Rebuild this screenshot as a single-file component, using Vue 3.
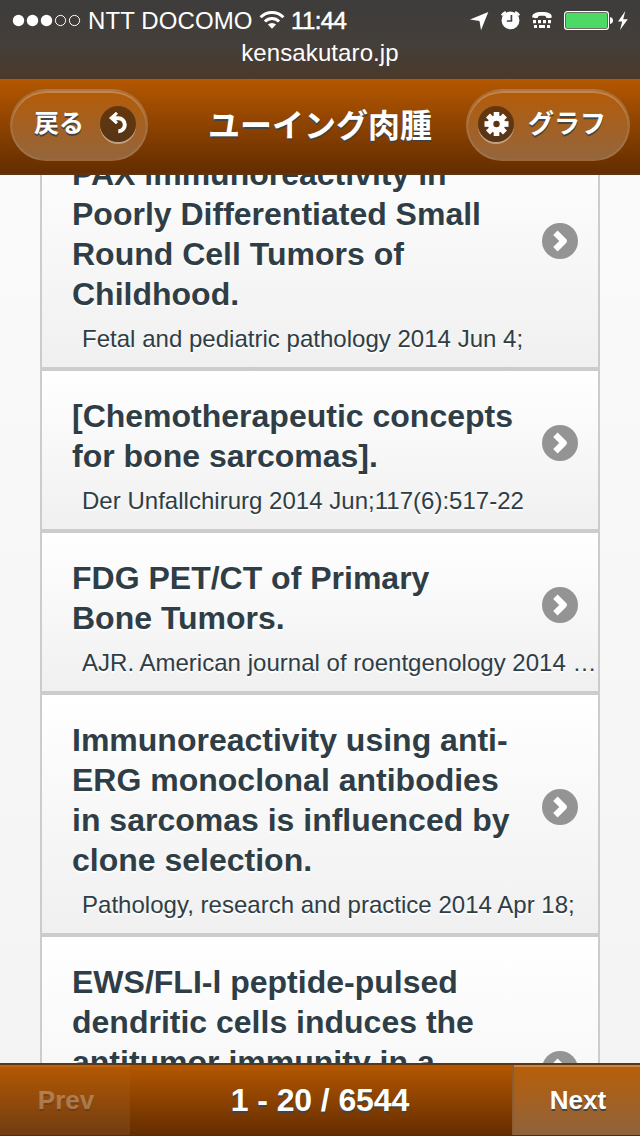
<template>
  <div class="screen">
    <div class="status">
      <div class="status-row">
        <div class="carrier">
          <svg class="signal" width="70" height="14" viewBox="0 0 70 14">
            <circle v-for="n in 3" :key="n" :cx="6.5 + (n - 1) * 14" cy="7.5" r="5.7" fill="#fff" />
            <circle v-for="n in 2" :key="n + 3" :cx="48.500 + (n - 1) * 14" cy="7.500" r="5.100" fill="none" stroke="#fff" />
          </svg>
          <span class="network">NTT DOCOMO</span>
          <svg class="wifi" width="26" height="20" viewBox="0 0 26 20">
            <g fill="none" stroke="#fff" stroke-width="3">
              <path d="M1.6 7.2a16.1 16.1 0 0 1 22.8 0" />
              <path d="M5.9 11.5a10 10 0 0 1 14.2 0" />
            </g>
            <path d="M8.9 14.6a5.8 5.8 0 0 1 8.2 0L13 18.7z" fill="#fff" />
          </svg>
          <span class="time">11:44</span>
        </div>
        <div class="indicators">
          <svg width="170" height="24" viewBox="0 0 170 24">
            <path d="M0 11.5 18.3 4 11 22.3 9.5 13z" fill="#fff" />
            <circle cx="40.5" cy="12.4" r="8.900" fill="#fff" />
            <path d="M31.8 7.300a9.700 9.700 0 0 1 4-3.300M45.200 4a9.700 9.700 0 0 1 4 3.300" fill="none" stroke="#fff" stroke-width="2.200" />
            <path d="M41.400 7v6h-4.600" fill="none" stroke="#44403c" stroke-width="1.700" />
            <path d="M62.200 9C62 6 65 4 72 4s10 2 9.800 5c0 1.600-6 1.600-6 0V8.200c-2-.6-5.600-.6-7.600 0V9c0 1.600-6 1.600-6 0z" fill="#fff" />
            <path d="M63 12h3v3.200h-3zM68 12h3v3.200h-3zM73 12h3v3.200h-3zM78 12h3v3.200h-3zM64 17h3v3h-3zM69 17h6v3h-6zM77 17h3v3h-3z" fill="#fff" />
            <rect x="94.600" y="3.600" width="43.800" height="17.800" rx="2.600" fill="none" stroke="#fff" stroke-width="1.200" />
            <rect x="96" y="5" width="41" height="15" rx="1" fill="#4cd964" />
            <path d="M140 9q3 .8 3 3.500T140 16z" fill="#fff" />
            <path d="M155.300 3 148 13.500h4.200L150 22l7.800-10.800h-4.600z" fill="#fff" />
          </svg>
        </div>
      </div>
      <div class="host"><span>kensakutaro.jp</span></div>
    </div>

    <header class="header">
      <button class="pill back" type="button">
        <span class="pill-text">戻る</span>
        <span class="disc">
          <svg width="36" height="36" viewBox="0 0 36 36">
            <path d="M12 12.300h6.300a6.500 6.500 0 0 1 0 13" fill="none" stroke="#fff" stroke-width="4" />
            <path d="M9.500 12 16 6.300l1.400 1.500-3.600 4.200 3.600 4.200-1.400 1.600z" fill="#fff" stroke="#fff" stroke-linejoin="round" />
          </svg>
        </span>
      </button>
      <h1 class="heading">ユーイング肉腫</h1>
      <button class="pill graph" type="button">
        <span class="disc">
          <svg width="36" height="36" viewBox="0 0 36 36">
            <g fill="#fff">
              <rect v-for="a in [0, 45, 90, 135]" :key="a" x="15.700" y="6" width="5.600" height="24" :transform="`rotate(${a} 18.5 18)`" />
              <circle cx="18.500" cy="18" r="8.700" />
            </g>
            <circle cx="18.500" cy="18" r="3.200" fill="#5c3512" />
          </svg>
        </span>
        <span class="pill-text">グラフ</span>
      </button>
    </header>

    <main class="content">
      <ul class="list">
        <li v-for="item in articles" :key="item.title" class="item">
          <h2 class="title">{{ item.title }}</h2>
          <p class="source">{{ item.source }}</p>
          <svg class="arrow" width="36" height="36" viewBox="0 0 36 36">
            <circle cx="18" cy="18" r="18" fill="#949494" />
            <path d="m13.400 9.700 8.300 8.300-8.300 8.300" fill="none" stroke="#fff" stroke-width="6.200" stroke-linejoin="round" />
          </svg>
        </li>
      </ul>
    </main>

    <footer class="footer">
      <button class="page-btn prev" type="button" disabled><span>Prev</span></button>
      <div class="range"><span>1 - 20 / 6544</span></div>
      <button class="page-btn next" type="button"><span>Next</span></button>
    </footer>
  </div>
</template>

<script setup>
const articles = [
  {
    title: "PAX immunoreactivity in\nPoorly Differentiated Small\nRound Cell Tumors of\nChildhood.",
    source: "Fetal and pediatric pathology 2014 Jun 4;",
  },
  {
    title: "[Chemotherapeutic concepts\nfor bone sarcomas].",
    source: "Der Unfallchirurg 2014 Jun;117(6):517-22",
  },
  {
    title: "FDG PET/CT of Primary\nBone Tumors.",
    source: "AJR. American journal of roentgenology 2014 Jun;202(6)",
  },
  {
    title: "Immunoreactivity using anti-\nERG monoclonal antibodies\nin sarcomas is influenced by\nclone selection.",
    source: "Pathology, research and practice 2014 Apr 18;",
  },
  {
    title: "EWS/FLI-l peptide-pulsed\ndendritic cells induces the\nantitumor immunity in a\nmurine model of\nsarcoma.",
    source: "",
  },
];
</script>

<style>
body {
  margin: 0;
  overflow: hidden;
}
</style>

<style scoped>
.screen {
  width: 640px;
  height: 1136px;
  display: flex;
  flex-direction: column;
  overflow: hidden;
  background: #f7f7f7;
  font-family: "Liberation Sans", "Noto Sans CJK JP", sans-serif;
  color: #2f3e46;
}

.status {
  height: 79px;
  flex: none;
  color: #fff;
  background: linear-gradient(#3d3c3a, #443f3b 55%, #4b392a);
}

.status-row {
  height: 40px;
  display: flex;
  justify-content: space-between;
}

.carrier {
  display: flex;
  align-items: center;
  padding-left: 12px;
  font-size: 24px;
}

.network {
  margin-left: 6px;
  padding-top: 1px;
  width: 165px;
  letter-spacing: 0.1px;
  white-space: nowrap;
}

.wifi {
  margin-left: 6px;
}

.time {
  margin-left: 6px;
  padding-top: 1px;
  letter-spacing: -0.6px;
  -webkit-text-stroke: 0.5px #fff;
}

.indicators {
  padding: 8px 0 0;
}

.indicators svg {
  display: block;
}

.host {
  height: 27px;
  margin-top: -1px;
  line-height: 27px;
  font-size: 24px;
  letter-spacing: 0.1px;
  text-align: center;
}

.header {
  height: 96px;
  flex: none;
  box-sizing: border-box;
  display: flex;
  align-items: flex-start;
  justify-content: space-between;
  padding: 10px 10px 0;
  border-top: 1px solid #b35a08;
  border-bottom: 2px solid #5c3512;
  background: linear-gradient(#b45700, #642d00);
  color: #fff;
  text-shadow: 0 2px 0 #444;
}

.pill {
  height: 72px;
  margin-top: -1px;
  box-sizing: border-box;
  display: flex;
  align-items: center;
  padding: 0 10px 3px;
  border: 2px solid rgba(165, 125, 88, 0.55);
  border-radius: 36px;
  background: linear-gradient(rgba(189, 102, 16, 0.5), rgba(185, 151, 119, 0.5));
  box-shadow: inset 0 2px 0 rgba(255, 255, 255, 0.25);
  color: #fff;
  font: bold 25px "Liberation Sans", "Noto Sans CJK JP", sans-serif;
  text-shadow: 0 2px 0 #444;
}

.pill-text {
  padding-bottom: 5px;
}

.back {
  width: 138px;
  justify-content: space-between;
  padding-left: 22px;
}

.graph {
  width: 164px;
  justify-content: space-between;
  padding-right: 22px;
}

.graph .pill-text {
  font-size: 26px;
}

.disc {
  width: 36px;
  height: 36px;
  border-radius: 50%;
  background: linear-gradient(#66370c, #553516);
  box-shadow: 0 2px 0 rgba(255, 255, 255, 0.4);
}

.disc svg {
  display: block;
}

.heading {
  margin: 12px 0 0 26px;
  width: 224px;
  font-size: 32px;
  line-height: 48px;
  white-space: nowrap;
}

.content {
  flex: 1;
  min-height: 0;
  overflow: hidden;
  padding: 0 40px;
  background: linear-gradient(#fafafa, #f4f4f4);
}

.list {
  list-style: none;
  margin: -46px 0 0;
  padding: 0;
  border: solid #ccc;
  border-width: 0 2px;
}

.item {
  position: relative;
  padding: 25px 0 13px 30px;
  border-bottom: 4px solid #ccc;
  background: linear-gradient(#fff, #f0f0f0);
  text-shadow: 0 2px 0 #fff;
}

.title {
  margin: 0;
  font-size: 32px;
  line-height: 40px;
  white-space: pre-line;
}

.source {
  margin: 10px 0 0 10px;
  height: 30px;
  font-size: 24px;
  line-height: 30px;
  letter-spacing: 0.02px;
  white-space: nowrap;
  overflow: hidden;
  text-overflow: ellipsis;
}

.arrow {
  position: absolute;
  right: 20px;
  top: 50%;
  margin-top: -25px;
}

.footer {
  height: 73px;
  flex: none;
  box-sizing: border-box;
  display: flex;
  border-top: 2px solid #5c3512;
  border-bottom: 1px solid #5c2a04;
  background: linear-gradient(#b45700, #642d00);
}

.page-btn,
.range {
  display: flex;
  align-items: center;
  justify-content: center;
  color: #fff;
  text-shadow: 0 2px 0 #444;
}

.page-btn {
  border: none;
  font: bold 26px "Liberation Sans", sans-serif;
  background: linear-gradient(rgba(189, 102, 16, 0.5), rgba(185, 151, 119, 0.5));
  box-shadow: inset 0 2px 0 rgba(255, 255, 255, 0.25);
}

.prev {
  width: 130px;
  padding: 0 0 0 2px;
  opacity: 0.3;
}

.next {
  width: 128px;
  padding: 0 0 0 2px;
  border-left: 2px solid #8a5d35;
}

.range {
  flex: 1;
  padding-right: 2px;
  font-size: 32px;
  font-weight: bold;
  letter-spacing: -0.1px;
}
</style>
